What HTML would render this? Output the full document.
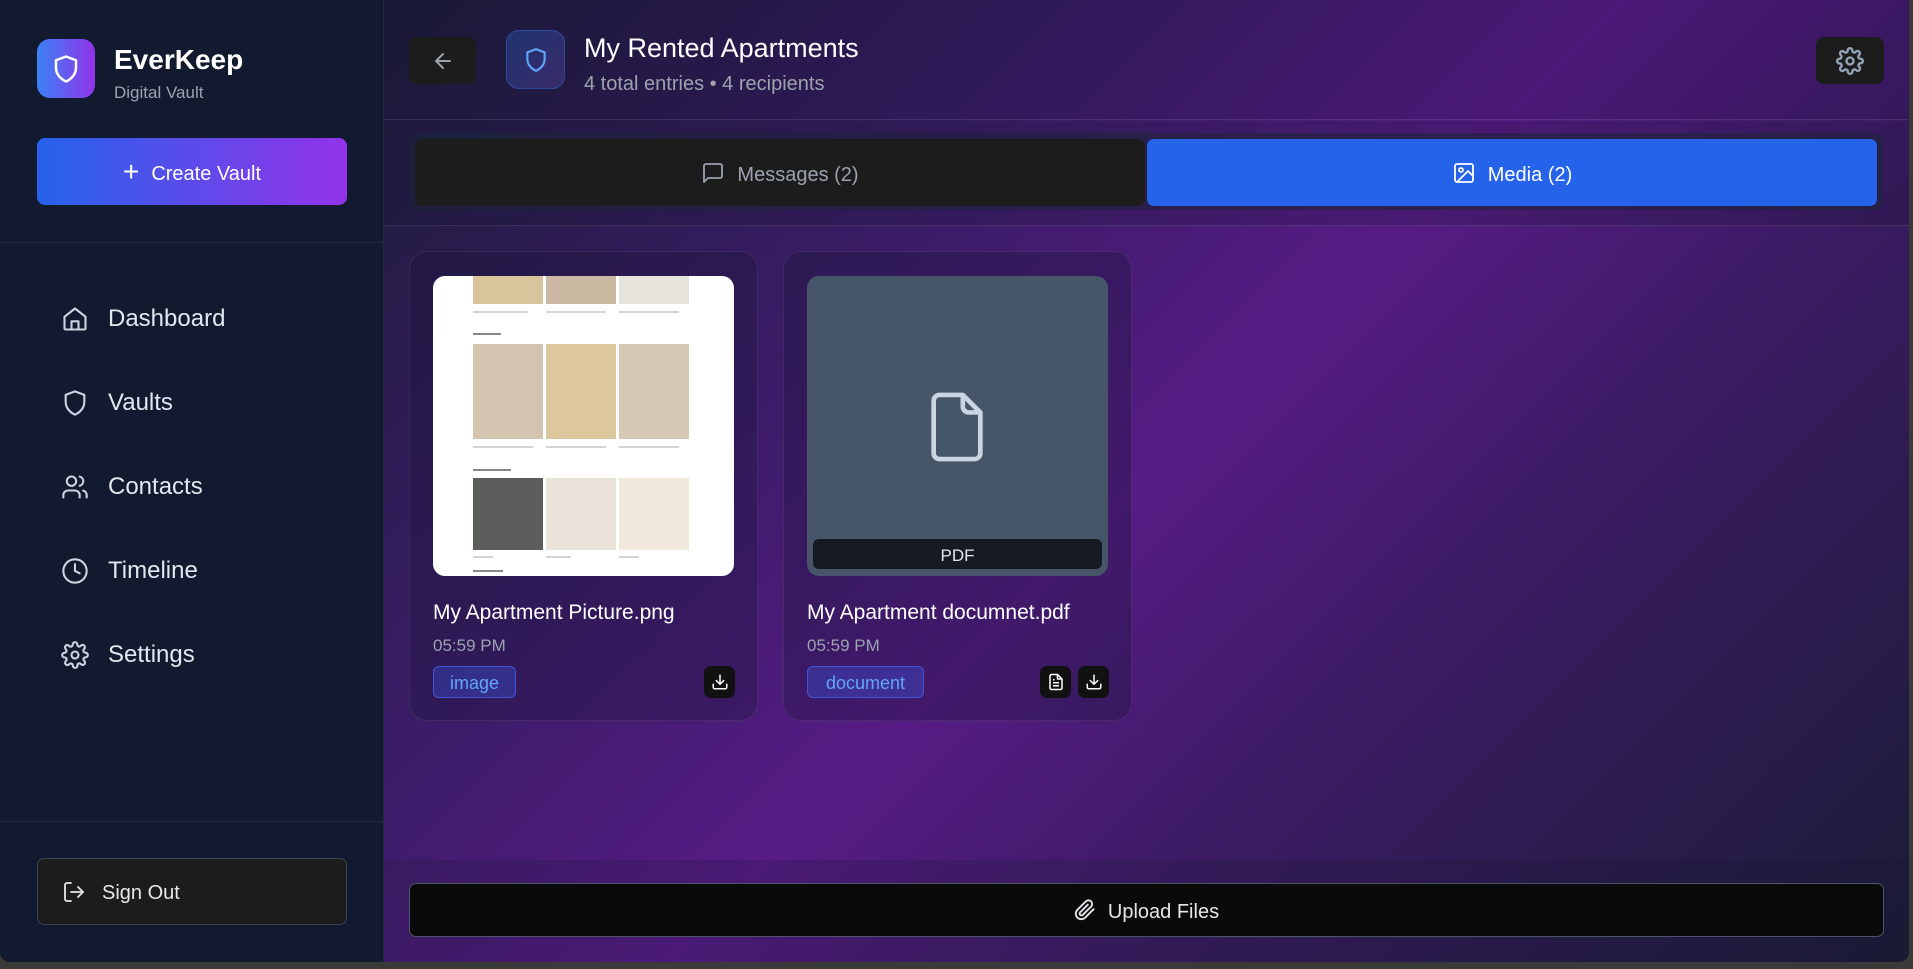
<!DOCTYPE html>
<html><head><meta charset="utf-8"><style>
*{box-sizing:border-box;margin:0;padding:0}
body{width:1913px;height:969px;background:#3a3a3a;font-family:"Liberation Sans",sans-serif;overflow:hidden;position:relative}
.app{position:absolute;left:0;top:0;width:1909px;height:962px;border-radius:0 0 10px 10px;overflow:hidden;background:#121a2e}
.side{position:absolute;left:0;top:0;width:384px;height:962px;background:#111a2e;border-right:1px solid #1f2a3f}
.main{position:absolute;left:384px;top:0;right:0;height:962px;background:linear-gradient(135deg,#1b1c38 0%,#3a1c66 30%,#561c85 50%,#3a1b62 68%,#1a1c36 100%)}
svg{display:block}
.abs{position:absolute}
.nav{position:absolute;left:61px;display:flex;align-items:center;color:#e2e8f0;font-size:24px;font-weight:500}
.nav svg{margin-right:19px}
.card{position:absolute;top:251px;width:349px;height:470px;border-radius:18px;background:rgba(30,20,60,0.35);border:1px solid rgba(255,255,255,0.08)}
.fname{position:absolute;left:23px;top:349px;color:#fff;font-size:21px;font-weight:500}
.time{position:absolute;left:23px;top:384px;color:#9ca3af;font-size:17px}
.badge{position:absolute;top:414px;height:32px;border-radius:6px;background:rgba(59,90,230,0.35);border:1px solid #3f56d6;color:#60a5fa;font-size:18px;display:flex;align-items:center;justify-content:center;padding-top:3px;font-weight:500}
.ib{position:absolute;top:414px;width:31px;height:32px;border-radius:7px;background:#111;display:flex;align-items:center;justify-content:center}
.ln{position:absolute;height:2px;background:#d4d4d4}
</style></head><body>
<div class="app">
<div class="side">
  <div class="abs" style="left:37px;top:39px;width:58px;height:59px;border-radius:13px;background:linear-gradient(90deg,#3b82f6,#9333ea);display:flex;align-items:center;justify-content:center">
    <svg width="30" height="34" viewBox="0 0 24 24" fill="none" stroke="#fff" stroke-width="2" stroke-linejoin="round"><path d="M12 2l8 3v6c0 5-3.5 9-8 11-4.5-2-8-6-8-11V5z"/></svg>
  </div>
  <div class="abs" style="left:114px;top:44px;color:#fff;font-size:28px;font-weight:bold">EverKeep</div>
  <div class="abs" style="left:114px;top:83px;color:#9ca3af;font-size:17px">Digital Vault</div>
  <div class="abs" style="left:37px;top:138px;width:310px;height:67px;border-radius:8px;background:linear-gradient(90deg,#2563eb,#9333ea);color:#fff;font-size:20px;display:flex;align-items:center;justify-content:center;padding-top:5px;font-weight:500"><span style="font-size:28px;margin-right:12px;font-weight:300;position:relative;top:-2px">+</span>Create Vault</div>
  <div class="abs" style="left:0;top:242px;width:384px;height:1px;background:#1f2a3f"></div>
  <div class="nav" style="top:305px"><svg width="28" height="28" viewBox="0 0 24 24" fill="none" stroke="#cbd5e1" stroke-width="1.8" stroke-linejoin="round"><path d="M3 10l9-7 9 7v10a1 1 0 0 1-1 1H4a1 1 0 0 1-1-1z"/><path d="M9 21v-7h6v7"/></svg><span>Dashboard</span></div>
  <div class="nav" style="top:389px"><svg width="28" height="28" viewBox="0 0 24 24" fill="none" stroke="#cbd5e1" stroke-width="1.8" stroke-linejoin="round"><path d="M12 2l8 3v6c0 5-3.5 9-8 11-4.5-2-8-6-8-11V5z"/></svg><span>Vaults</span></div>
  <div class="nav" style="top:473px"><svg width="28" height="28" viewBox="0 0 24 24" fill="none" stroke="#cbd5e1" stroke-width="1.8" stroke-linecap="round"><circle cx="9" cy="7" r="4"/><path d="M2 21v-2a4 4 0 0 1 4-4h6a4 4 0 0 1 4 4v2"/><path d="M16 3.1a4 4 0 0 1 0 7.8"/><path d="M22 21v-2a4 4 0 0 0-3-3.9"/></svg><span>Contacts</span></div>
  <div class="nav" style="top:557px"><svg width="28" height="28" viewBox="0 0 24 24" fill="none" stroke="#cbd5e1" stroke-width="1.8" stroke-linecap="round"><circle cx="12" cy="12" r="10"/><path d="M12 6v6l4 2"/></svg><span>Timeline</span></div>
  <div class="nav" style="top:641px"><svg width="28" height="28" viewBox="0 0 24 24" fill="none" stroke="#cbd5e1" stroke-width="1.8"><circle cx="12" cy="12" r="3"/><path d="M19.4 15a1.7 1.7 0 0 0 .3 1.8l.1.1a2 2 0 1 1-2.8 2.8l-.1-.1a1.7 1.7 0 0 0-1.8-.3 1.7 1.7 0 0 0-1 1.5V21a2 2 0 1 1-4 0v-.1a1.7 1.7 0 0 0-1.1-1.5 1.7 1.7 0 0 0-1.8.3l-.1.1a2 2 0 1 1-2.8-2.8l.1-.1a1.7 1.7 0 0 0 .3-1.8 1.7 1.7 0 0 0-1.5-1H3a2 2 0 1 1 0-4h.1a1.7 1.7 0 0 0 1.5-1.1 1.7 1.7 0 0 0-.3-1.8l-.1-.1a2 2 0 1 1 2.8-2.8l.1.1a1.7 1.7 0 0 0 1.8.3H9a1.7 1.7 0 0 0 1-1.5V3a2 2 0 1 1 4 0v.1a1.7 1.7 0 0 0 1 1.5 1.7 1.7 0 0 0 1.8-.3l.1-.1a2 2 0 1 1 2.8 2.8l-.1.1a1.7 1.7 0 0 0-.3 1.8V9a1.7 1.7 0 0 0 1.5 1H21a2 2 0 1 1 0 4h-.1a1.7 1.7 0 0 0-1.5 1z"/></svg><span>Settings</span></div>
  <div class="abs" style="left:0;top:821px;width:384px;height:1px;background:#1f2a3f"></div>
  <div class="abs" style="left:37px;top:858px;width:310px;height:67px;border-radius:7px;background:#1c1c1c;border:1px solid #3b4556;color:#e5e7eb;font-size:20px;display:flex;align-items:center;padding-left:24px;padding-top:4px"><svg width="24" height="24" viewBox="0 0 24 24" fill="none" stroke="#e5e7eb" stroke-width="1.8" stroke-linecap="round" stroke-linejoin="round" style="margin-right:16px;margin-top:-4px"><path d="M9 21H5a2 2 0 0 1-2-2V5a2 2 0 0 1 2-2h4"/><path d="M16 17l5-5-5-5"/><path d="M21 12H9"/></svg>Sign Out</div>
</div>
<div class="main">
  <div class="abs" style="left:0;top:0;right:0;height:120px;background:rgba(15,15,40,0.15);border-bottom:1px solid rgba(255,255,255,0.1)"></div>
  <div class="abs" style="left:25px;top:37px;width:67px;height:47px;border-radius:8px;background:#1c1c1c;display:flex;align-items:center;justify-content:center"><svg width="24" height="24" viewBox="0 0 24 24" fill="none" stroke="#9ca3af" stroke-width="2" stroke-linecap="round" stroke-linejoin="round"><path d="M19 12H5M12 19l-7-7 7-7"/></svg></div>
  <div class="abs" style="left:122px;top:30px;width:59px;height:59px;border-radius:13px;background:linear-gradient(135deg,#1f3470,#3a2a6a);border:1px solid #2e4a9a;display:flex;align-items:center;justify-content:center"><svg width="26" height="28" viewBox="0 0 24 24" fill="none" stroke="#60a5fa" stroke-width="2" stroke-linejoin="round"><path d="M12 2l8 3v6c0 5-3.5 9-8 11-4.5-2-8-6-8-11V5z"/></svg></div>
  <div class="abs" style="left:200px;top:33px;color:#fff;font-size:27px;font-weight:500">My Rented Apartments</div>
  <div class="abs" style="left:200px;top:73px;color:#9ca3af;font-size:20px">4 total entries • 4 recipients</div>
  <div class="abs" style="left:1432px;top:37px;width:68px;height:47px;border-radius:8px;background:#1c1c1c;display:flex;align-items:center;justify-content:center"><svg width="28" height="28" viewBox="0 0 24 24" fill="none" stroke="#94a3b8" stroke-width="2"><circle cx="12" cy="12" r="3"/><path d="M19.4 15a1.7 1.7 0 0 0 .3 1.8l.1.1a2 2 0 1 1-2.8 2.8l-.1-.1a1.7 1.7 0 0 0-1.8-.3 1.7 1.7 0 0 0-1 1.5V21a2 2 0 1 1-4 0v-.1a1.7 1.7 0 0 0-1.1-1.5 1.7 1.7 0 0 0-1.8.3l-.1.1a2 2 0 1 1-2.8-2.8l.1-.1a1.7 1.7 0 0 0 .3-1.8 1.7 1.7 0 0 0-1.5-1H3a2 2 0 1 1 0-4h.1a1.7 1.7 0 0 0 1.5-1.1 1.7 1.7 0 0 0-.3-1.8l-.1-.1a2 2 0 1 1 2.8-2.8l.1.1a1.7 1.7 0 0 0 1.8.3H9a1.7 1.7 0 0 0 1-1.5V3a2 2 0 1 1 4 0v.1a1.7 1.7 0 0 0 1 1.5 1.7 1.7 0 0 0 1.8-.3l.1-.1a2 2 0 1 1 2.8 2.8l-.1.1a1.7 1.7 0 0 0-.3 1.8V9a1.7 1.7 0 0 0 1.5 1H21a2 2 0 1 1 0 4h-.1a1.7 1.7 0 0 0-1.5 1z"/></svg></div>
  <div class="abs" style="left:0;top:121px;right:0;height:105px;background:rgba(20,20,45,0.2);border-bottom:1px solid rgba(255,255,255,0.1)"></div>
  <div class="abs" style="left:25px;top:133px;width:1474px;height:77px;border-radius:10px;background:rgba(30,35,60,0.6)"></div>
  <div class="abs" style="left:31px;top:139px;width:730px;height:67px;border-radius:7px;background:#1c1c1c;color:#9ca3af;font-size:20px;display:flex;align-items:center;justify-content:center;padding-top:6px;font-weight:500"><svg width="24" height="24" viewBox="0 0 24 24" fill="none" stroke="#9ca3af" stroke-width="1.8" stroke-linejoin="round" style="margin-right:12px;margin-top:-6px"><path d="M21 15a2 2 0 0 1-2 2H7l-4 4V5a2 2 0 0 1 2-2h14a2 2 0 0 1 2 2z"/></svg>Messages (2)</div>
  <div class="abs" style="left:763px;top:139px;width:730px;height:67px;border-radius:7px;background:#2563eb;color:#fff;font-size:20px;display:flex;align-items:center;justify-content:center;padding-top:6px;font-weight:500"><svg width="24" height="24" viewBox="0 0 24 24" fill="none" stroke="#fff" stroke-width="1.8" stroke-linejoin="round" style="margin-right:12px;margin-top:-6px"><rect x="3" y="3" width="18" height="18" rx="2"/><circle cx="9" cy="9" r="2"/><path d="M21 15l-5-5L5 21"/></svg>Media (2)</div>

  <div class="card" style="left:25px">
    <div class="abs" style="left:23px;top:24px;width:301px;height:300px;border-radius:12px;background:#fff;overflow:hidden">
      <div class="abs" style="left:40px;top:0;width:70px;height:28px;background:#d9c59c"></div>
      <div class="abs" style="left:113px;top:0;width:70px;height:28px;background:#cbb9a4"></div>
      <div class="abs" style="left:186px;top:0;width:70px;height:28px;background:#e6e2dc"></div>
      <div class="ln" style="left:40px;top:35px;width:55px"></div><div class="ln" style="left:113px;top:35px;width:60px"></div><div class="ln" style="left:186px;top:35px;width:60px"></div>
      <div class="ln" style="left:40px;top:57px;width:28px;background:#888"></div>
      <div class="abs" style="left:40px;top:68px;width:70px;height:95px;background:#d2c4ae"></div>
      <div class="abs" style="left:113px;top:68px;width:70px;height:95px;background:#dcc79e"></div>
      <div class="abs" style="left:186px;top:68px;width:70px;height:95px;background:#d5c8b4"></div>
      <div class="ln" style="left:40px;top:170px;width:60px"></div><div class="ln" style="left:113px;top:170px;width:60px"></div><div class="ln" style="left:186px;top:170px;width:60px"></div>
      <div class="ln" style="left:40px;top:193px;width:38px;background:#888"></div>
      <div class="abs" style="left:40px;top:202px;width:70px;height:72px;background:#5c5e5c"></div>
      <div class="abs" style="left:113px;top:202px;width:70px;height:72px;background:#ebe3da"></div>
      <div class="abs" style="left:186px;top:202px;width:70px;height:72px;background:#f1e8dc"></div>
      <div class="ln" style="left:40px;top:280px;width:20px"></div><div class="ln" style="left:113px;top:280px;width:25px"></div><div class="ln" style="left:186px;top:280px;width:20px"></div>
      <div class="ln" style="left:40px;top:294px;width:30px;background:#888"></div>
    </div>
    <div class="fname">My Apartment Picture.png</div>
    <div class="time">05:59 PM</div>
    <div class="badge" style="left:23px;width:83px">image</div>
    <div class="ib" style="left:294px"><svg width="18" height="18" viewBox="0 0 24 24" fill="none" stroke="#fff" stroke-width="2" stroke-linecap="round" stroke-linejoin="round"><path d="M21 15v4a2 2 0 0 1-2 2H5a2 2 0 0 1-2-2v-4M7 10l5 5 5-5M12 15V3"/></svg></div>
  </div>

  <div class="card" style="left:399px">
    <div class="abs" style="left:23px;top:24px;width:301px;height:300px;border-radius:12px;background:#475569">
      <svg class="abs" style="left:120px;top:116px" width="60" height="70" viewBox="0 0 20 24" fill="none" stroke="#cbd5e1" stroke-width="1.6" stroke-linejoin="round"><path d="M12 1H4a2 2 0 0 0-2 2v18a2 2 0 0 0 2 2h12a2 2 0 0 0 2-2V7z"/><path d="M12 1v4a2 2 0 0 0 2 2h4"/></svg>
      <div class="abs" style="left:6px;top:263px;width:289px;height:30px;border-radius:6px;background:#151a23;color:#e5e7eb;font-size:17px;display:flex;align-items:center;justify-content:center;padding-top:3px">PDF</div>
    </div>
    <div class="fname">My Apartment documnet.pdf</div>
    <div class="time">05:59 PM</div>
    <div class="badge" style="left:23px;width:117px">document</div>
    <div class="ib" style="left:256px"><svg width="18" height="18" viewBox="0 0 24 24" fill="none" stroke="#fff" stroke-width="2" stroke-linejoin="round"><path d="M14 2H6a2 2 0 0 0-2 2v16a2 2 0 0 0 2 2h12a2 2 0 0 0 2-2V8z"/><path d="M14 2v6h6M8 13h8M8 17h8M8 9h2"/></svg></div>
    <div class="ib" style="left:294px"><svg width="18" height="18" viewBox="0 0 24 24" fill="none" stroke="#fff" stroke-width="2" stroke-linecap="round" stroke-linejoin="round"><path d="M21 15v4a2 2 0 0 1-2 2H5a2 2 0 0 1-2-2v-4M7 10l5 5 5-5M12 15V3"/></svg></div>
  </div>

  <div class="abs" style="left:0;top:860px;right:0;height:102px;background:rgba(20,20,45,0.18)"></div>
  <div class="abs" style="left:25px;top:883px;width:1475px;height:54px;border-radius:7px;background:#0a0a0a;border:1px solid #4b5567;color:#e5e7eb;font-size:20px;display:flex;align-items:center;justify-content:center;padding-top:5px;font-weight:500"><svg width="22" height="22" viewBox="0 0 24 24" fill="none" stroke="#e5e7eb" stroke-width="2" stroke-linecap="round" stroke-linejoin="round" style="margin-right:12px;margin-top:-5px"><path d="M21.4 11.1l-9.2 9.2a6 6 0 0 1-8.5-8.5l9.2-9.2a4 4 0 0 1 5.7 5.7l-9.2 9.2a2 2 0 0 1-2.8-2.8l8.5-8.5"/></svg>Upload Files</div>
</div>
</div>
</body></html>
